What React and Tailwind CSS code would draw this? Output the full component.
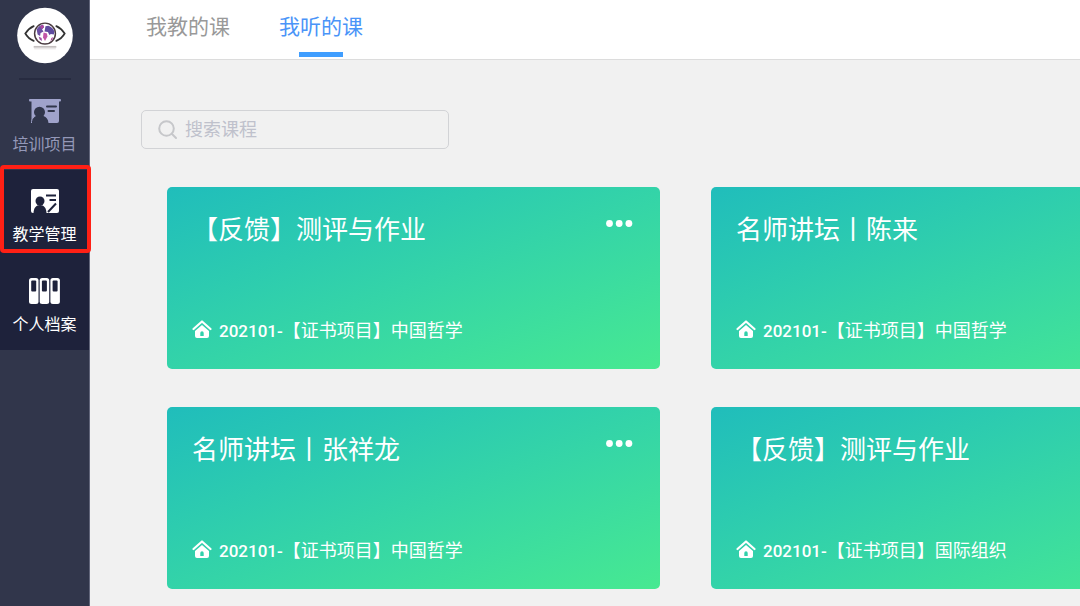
import { useState } from 'react'
import clsx from 'clsx'

const courses = [
  { id: 1, title: '【反馈】测评与作业', code: '202101-', project: '【证书项目】中国哲学' },
  { id: 2, title: '名师讲坛丨陈来', code: '202101-', project: '【证书项目】中国哲学' },
  { id: 3, title: '名师讲坛丨张祥龙', code: '202101-', project: '【证书项目】中国哲学' },
  { id: 4, title: '【反馈】测评与作业', code: '202101-', project: '【证书项目】国际组织' },
]

function Logo() {
  return (
    <svg viewBox="0 0 58 58" className="w-[58px] h-[58px]" role="img" aria-label="Logo">
      <circle cx="29" cy="29" r="28.3" fill="#fff" />
      <g fill="none" stroke="#333" strokeWidth="1.8" strokeLinecap="round">
        <path d="M17.5 19.5C14 21 11 24 9 27c2 3.500 5 6 8.500 7.500" />
        <path d="M40.500 19.500C44 21 47 24 49 27c-2 3.500-5 6-8.500 7.500" />
      </g>
      <circle cx="29" cy="27" r="10.600" fill="#fff" stroke="#4a3b40" strokeWidth="1.500" />
      <path d="M20.500 23c1.500-3 3.500-4.500 6.500-5l1 2.500-2 2.500 1.500 2-3 1.500-.5 3-2.500-1.500z" fill="#6b4fa3" />
      <path d="M24 19.500l3-1.500 1 2.500-2.500 2z" fill="#b0449c" />
      <path d="M29.500 19.500l3-.5c3 1 5 3 6 6l-.5 3-3-.5-1.500 1-1.500-3-3.500-.5z" fill="#5e4a9e" />
      <path d="M27.500 26l3.500 1 .5 3-2.500 4.500-2-3.500z" fill="#c257a8" />
      <path d="M22.500 30l3 1.500.5 3-2.500-1.500z" fill="#9c4fa5" />
      <path d="M35.500 31.500l2-1-1.500 3-1.500 1z" fill="#b0449c" />
      <path d="M17.500 40.500h23" stroke="#c4bfbf" strokeWidth="1.800" />
      <path d="M18 42.500h22" stroke="#e2dede" strokeWidth="1" />
    </svg>
  )
}

function ProjectIcon() {
  return (
    <svg viewBox="0 0 32 24" className="w-8 h-6" aria-hidden="true">
      <path d="M1 0h30q1 0 1 1.200T31 2.500h-1V22q0 2-2 2h-8.500c-.5-4-2-6-5-7a5.500 5.500 0 1 0-8 0c-2 .8-3.500 2-4 5V2.500H1Q0 2.500 0 1.200T1 0z" fill="#a0a3cb" />
      <path d="M18 7.500h9M19.500 12h5.500" stroke="#31364b" strokeWidth="2" strokeLinecap="round" />
      <path d="M2.500 24v-1.500c.5-3 2-4.500 4-5.500" fill="none" stroke="#a0a3cb" strokeWidth="1" />
    </svg>
  )
}

function TeachIcon() {
  return (
    <svg viewBox="0 0 30 24" className="w-[30px] h-6" aria-hidden="true">
      <rect x="1" width="28" height="24" rx="2" fill="#fff" />
      <g fill="#1e223b">
        <circle cx="10" cy="12" r="4.500" />
        <path d="M3.500 24c.2-5 2.500-8 6.500-8s6.300 3 6.500 8z" />
      </g>
      <path d="M16 6.500h10M19.500 11h6.500M26 14.500l-8 8.500" stroke="#1e223b" strokeWidth="2" fill="none" />
    </svg>
  )
}

function ArchiveIcon() {
  return (
    <svg viewBox="0 0 31 26" className="w-[31px] h-[26px]" aria-hidden="true">
      <g fill="#fff">
        <rect width="9.500" height="26" rx="2.500" />
        <rect x="10.700" width="9.500" height="26" rx="2.500" />
        <rect x="21.400" width="9.500" height="26" rx="2.500" />
      </g>
      <g fill="#1e223b">
        <rect x="2.200" y="2.500" width="5" height="11" rx="1" />
        <rect x="12.900" y="2.500" width="5" height="11" rx="1" />
        <rect x="23.600" y="2.500" width="5" height="11" rx="1" />
      </g>
    </svg>
  )
}

function HouseIcon() {
  return (
    <svg viewBox="0 0 20 18" className="w-5 h-[18px] mb-1 shrink-0" aria-hidden="true">
      <path d="M1.500 9L10 1.500 18.500 9" fill="none" stroke="#fff" strokeWidth="2.200" strokeLinejoin="round" strokeLinecap="round" />
      <path
        fillRule="evenodd"
        d="M10 5l7 6v5q0 2-2 2H5q-2 0-2-2v-5zM8.300 16h3.400v-3q0-1.700-1.700-1.700T8.300 13z"
        fill="#fff"
      />
    </svg>
  )
}

const menu = [
  { id: 'project', label: '培训项目', icon: ProjectIcon, dim: true },
  { id: 'teach', label: '教学管理', icon: TeachIcon, marked: true },
  { id: 'archive', label: '个人档案', icon: ArchiveIcon },
]

function Sidebar() {
  return (
    <aside className="w-[90px] shrink-0 bg-[#31364b] border-r border-[#62667b]">
      <div className="h-20 pt-[7px] flex flex-col items-center">
        <Logo />
        <div className="w-[52px] h-0.5 mt-3.5 bg-[#272b40]" />
      </div>
      <nav>
        {menu.map(({ id, label, icon: Icon, dim, marked }) => (
          <a
            key={id}
            href={`#${id}`}
            className={clsx(
              'relative h-[90px] flex flex-col items-center text-base leading-6',
              dim ? 'text-[#9498b8]' : 'bg-[#1e223b] text-white'
            )}
          >
            <span className="h-[26px] mt-[18px] mb-[9px] flex items-center">
              <Icon />
            </span>
            {label}
            {marked && (
              <span className="absolute -top-[5px] left-0 -right-[2px] h-[88px] border-4 border-[#ff2015] rounded-sm z-10" />
            )}
          </a>
        ))}
      </nav>
    </aside>
  )
}

function CourseCard({ course }) {
  return (
    <article className="h-[182px] px-[25px] pt-[25px] pb-[26px] flex flex-col justify-between rounded-[5px] bg-linear-to-br from-[#20bdbb] to-[#47e991] text-white">
      <div className="flex items-start justify-between">
        <h2 className="text-[26px] leading-9 whitespace-nowrap">{course.title}</h2>
        <button type="button" aria-label="更多" className="py-2 pr-0.5">
          <svg viewBox="0 0 27 7" className="w-[27px] h-[7px]" fill="#fff">
            <circle cx="3.500" cy="3.500" r="3.400" />
            <circle cx="13.200" cy="3.500" r="3.400" />
            <circle cx="22.900" cy="3.500" r="3.400" />
          </svg>
        </button>
      </div>
      <p className="flex items-center gap-[7px] text-lg leading-6 whitespace-nowrap">
        <HouseIcon />
        <span>
          <span className="text-[17px] font-medium">{course.code}</span>
          {course.project}
        </span>
      </p>
    </article>
  )
}

export default function App() {
  const [tab, setTab] = useState('listen')
  const tabs = [
    { id: 'teach', label: '我教的课' },
    { id: 'listen', label: '我听的课' },
  ]

  return (
    <div className="flex h-screen overflow-hidden bg-[#f1f1f1] font-[Roboto,'Noto_Sans_CJK_SC',sans-serif]">
      <Sidebar />

      <div className="flex-1 min-w-0">
        <header className="h-[60px] pl-14 flex gap-[49px] bg-white border-b border-[#dcdcdc]">
          {tabs.map(t => (
            <button
              key={t.id}
              type="button"
              onClick={() => setTab(t.id)}
              className={clsx(
                'flex flex-col items-center pt-[13px] text-[21px] leading-7',
                tab === t.id ? 'text-[#4a94f8]' : 'text-[#999]'
              )}
            >
              {t.label}
              {tab === t.id && <span className="w-11 h-[5px] mt-[11px] bg-[#409eff]" />}
            </button>
          ))}
        </header>

        <main className="pt-[50px] pl-[51px]">
          <label className="w-[308px] h-[39px] pl-4 flex items-center gap-[7px] border border-[#d2d3d6] rounded-[5px]">
            <svg viewBox="0 0 20 20" className="w-5 h-5 shrink-0" fill="none" stroke="#c6c7ca" strokeWidth="2" strokeLinecap="round" aria-hidden="true">
              <circle cx="8.500" cy="8.500" r="7.300" />
              <path d="M14 14l4 4" />
            </svg>
            <input
              type="text"
              aria-label="搜索课程"
              placeholder="搜索课程"
              className="flex-1 min-w-0 bg-transparent text-lg outline-none text-gray-600 placeholder:text-[#bfc1cc]"
            />
          </label>

          {/* Cards keep their width and run past the right edge */}
          <section className="mt-[38px] ml-[26px] grid grid-cols-[repeat(2,493px)] gap-x-[51px] gap-y-[38px]">
            {courses.map(c => (
              <CourseCard key={c.id} course={c} />
            ))}
          </section>
        </main>
      </div>
    </div>
  )
}
